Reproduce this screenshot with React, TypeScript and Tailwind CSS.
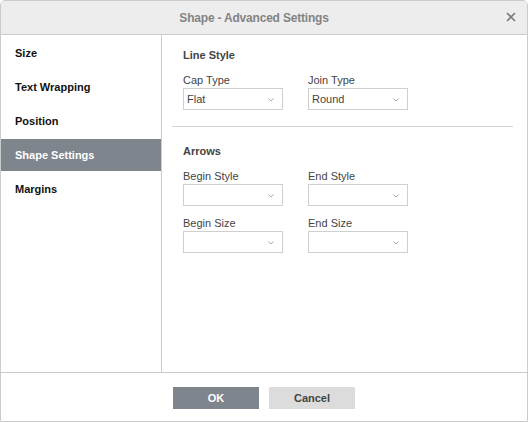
import React from "react";

const font = { fontFamily: '"Liberation Sans", Arial, sans-serif' };

function Chevron() {
  return (
    <svg width="6" height="4" viewBox="0 0 6 4" className="absolute right-[8px] top-[9px]">
      <path d="M0.5 0.5 L3 3 L5.5 0.5" fill="none" stroke="#a8a8a8" strokeWidth="1" />
    </svg>
  );
}

function Select({ value }: { value?: string }) {
  return (
    <div className="relative w-[100px] h-[22px] border border-[#cfcfcf] bg-white text-[11px] leading-[20px] pl-[3px] text-[#444]">
      {value}
      <Chevron />
    </div>
  );
}

function Field({ label, value, mt }: { label: string; value?: string; mt: string }) {
  return (
    <div className={`flex flex-col ${mt}`}>
      <div className="h-[14px] leading-[14px] text-[11px] text-[#444]">{label}</div>
      <div className="mt-[1px]">
        <Select value={value} />
      </div>
    </div>
  );
}

export default function App() {
  const items = ["Size", "Text Wrapping", "Position", "Shape Settings", "Margins"];
  return (
    <div style={font} className="w-[528px] h-[422px] bg-white">
      <div className="w-full h-full flex flex-col border border-[#cbcbcb] rounded-t-[5px] overflow-hidden">
        <div className="relative h-[34px] shrink-0 bg-[#ededed] border-b border-[#cbcbcb] flex items-center justify-center pr-[20px]">
          <span className="text-[12px] font-bold text-[#848484] pt-[1px] tracking-[-0.2px]">Shape - Advanced Settings</span>
          <svg width="10" height="10" viewBox="0 0 10 10" className="absolute right-[11px] top-[11px]">
            <path d="M1 1 L9 9 M9 1 L1 9" stroke="#7a7a7a" strokeWidth="1.6" />
          </svg>
        </div>
        <div className="flex-1 flex min-h-0">
          <div className="w-[161px] shrink-0 border-r border-[#cbcbcb] pt-[2px] flex flex-col gap-[2px]">
            {items.map((it) => (
              <div
                key={it}
                className={
                  "h-[32px] flex items-center pl-[14px] text-[11px] font-bold " +
                  (it === "Shape Settings" ? "bg-[#7e858c] text-white" : "text-[#111]")
                }
              >
                {it}
              </div>
            ))}
          </div>
          <div className="flex-1 flex flex-col pt-[13px] pl-[21px]">
            <div className="h-[14px] leading-[14px] text-[11px] font-bold text-[#444]">Line Style</div>
            <div className="flex gap-[25px]">
              <Field label="Cap Type" value="Flat" mt="mt-[11px]" />
              <Field label="Join Type" value="Round" mt="mt-[11px]" />
            </div>
            <div className="mt-[16px] h-px bg-[#d5d5d5] ml-[-11px] mr-[14px]" />
            <div className="mt-[17px] h-[14px] leading-[14px] text-[11px] font-bold text-[#444]">Arrows</div>
            <div className="flex gap-[25px]">
              <Field label="Begin Style" mt="mt-[11px]" />
              <Field label="End Style" mt="mt-[11px]" />
            </div>
            <div className="flex gap-[25px]">
              <Field label="Begin Size" mt="mt-[10px]" />
              <Field label="End Size" mt="mt-[10px]" />
            </div>
          </div>
        </div>
        <div className="h-[49px] shrink-0 border-t border-[#cbcbcb] flex justify-center items-start pt-[14px] gap-[10px]">
          <button className="w-[86px] h-[22px] bg-[#7e858c] text-white text-[11px] font-bold">OK</button>
          <button className="w-[86px] h-[22px] bg-[#dcdcdc] text-[#444] text-[11px] font-bold">Cancel</button>
        </div>
      </div>
    </div>
  );
}
